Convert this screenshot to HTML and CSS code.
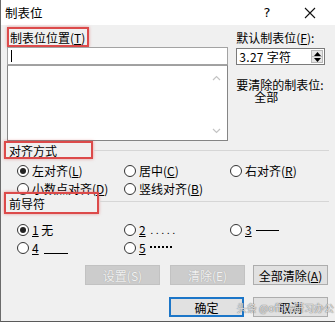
FILE: index.html
```html
<!DOCTYPE html>
<html lang="zh-CN">
<head>
<meta charset="utf-8">
<title>制表位</title>
<link rel="stylesheet" href="styles.css">
</head>
<body>
<div class="window">
  <div class="titlebar">
    <span class="title">制表位</span>
    <span class="help">?</span>
    <span class="close">
      <svg width="12" height="12" viewBox="0 0 12 12"><path d="M1 1L11 11M11 1L1 11" stroke="#111" stroke-width="1.1" fill="none"/></svg>
    </span>
  </div>
  <div class="body">
    <div class="top">
      <div class="left-col">
        <div class="mark mark-pos">制表位位置(<u>T</u>)</div>
        <div class="input"><span class="caret"></span></div>
        <div class="listbox">
          <svg class="scroll-up" width="9" height="6" viewBox="0 0 9 6"><path d="M1 5L4.5 1.5L8 5" stroke="#c4c4c4" stroke-width="1.2" fill="none"/></svg>
          <svg class="scroll-down" width="9" height="6" viewBox="0 0 9 6"><path d="M1 1L4.5 4.5L8 1" stroke="#c4c4c4" stroke-width="1.2" fill="none"/></svg>
        </div>
      </div>
      <div class="right-col">
        <div class="lbl">默认制表位(<u>F</u>):</div>
        <div class="spin">
          <span class="spin-val">3.27 字符</span>
          <span class="spin-btns">
            <span class="spin-b"><svg width="7" height="4" viewBox="0 0 7 4"><path d="M0 4L3.5 0L7 4Z" fill="#000"/></svg></span>
            <span class="spin-b"><svg width="7" height="4" viewBox="0 0 7 4"><path d="M0 0L3.5 4L7 0Z" fill="#000"/></svg></span>
          </span>
        </div>
        <div class="lbl clear-lbl">要清除的制表位:</div>
        <div class="lbl clear-val">全部</div>
      </div>
    </div>

    <div class="section-head">
      <div class="mark mark-align">对齐方式</div>
      <div class="rule"></div>
    </div>
    <div class="radios">
      <label class="radio"><span class="dot on"></span>左对齐(<u>L</u>)</label>
      <label class="radio"><span class="dot"></span>居中(<u>C</u>)</label>
      <label class="radio"><span class="dot"></span>右对齐(<u>R</u>)</label>
      <label class="radio"><span class="dot"></span>小数点对齐(<u>D</u>)</label>
      <label class="radio"><span class="dot"></span>竖线对齐(<u>B</u>)</label>
    </div>

    <div class="section-head lead-head">
      <div class="mark mark-lead">前导符</div>
      <div class="rule"></div>
    </div>
    <div class="radios leaders">
      <label class="radio"><span class="dot on"></span><u>1</u>&nbsp;无</label>
      <label class="radio"><span class="dot"></span><u>2</u>&nbsp;<span class="ld-dots">.....</span></label>
      <label class="radio"><span class="dot"></span><u>3</u>&nbsp;<span class="ld-dash"></span></label>
      <label class="radio"><span class="dot"></span><u>4</u>&nbsp;<span class="ld-under"></span></label>
      <label class="radio"><span class="dot"></span><u>5</u>&nbsp;<span class="ld-mid"></span></label>
    </div>

    <div class="btn-row">
      <span class="btn disabled">设置(S)</span>
      <span class="btn disabled">清除(E)</span>
      <span class="btn">全部清除(<u>A</u>)</span>
    </div>
    <div class="btn-row last">
      <span class="btn default">确定</span>
      <span class="btn">取消</span>
    </div>
  </div>
  <div class="watermark">头条 @office研习办公</div>
</div>
</body>
</html>
```

FILE: styles.css
```css
* { box-sizing: border-box; }
html, body { margin: 0; padding: 0; }
body {
  width: 335px;
  height: 322px;
  overflow: hidden;
  font-family: "Noto Sans CJK SC", "Noto Sans", sans-serif;
  font-size: 12px;
  color: #000;
  background: #f0f0f0;
}
u { text-decoration: underline; text-underline-offset: 1px; }

.window {
  position: relative;
  width: 335px;
  height: 322px;
  background: #f0f0f0;
  border-left: 1px solid #6b6b6b;
  border-bottom: 1px solid #5a5a5a;
  display: flex;
  flex-direction: column;
  overflow: hidden;
}

.titlebar {
  height: 25px;
  background: #fff;
  display: flex;
  align-items: center;
  flex: none;
}
.title {
  margin-left: 4px;
  font-size: 12.5px;
  line-height: 16px;
  margin-top: 1px;
}
.help {
  margin-left: auto;
  width: 12px;
  text-align: center;
  font-family: "DejaVu Sans", sans-serif;
  font-size: 13px;
  line-height: 16px;
}
.close {
  width: 12px;
  height: 12px;
  margin-left: 31px;
  margin-right: 19px;
  display: flex;
}

.body {
  padding: 2px 7px 0 6px;
  flex: 1;
  display: flex;
  flex-direction: column;
}

.top { display: flex; }
.left-col { width: 222px; display: flex; flex-direction: column; }
.right-col { margin-left: 8px; width: 92px; display: flex; flex-direction: column; }

.mark {
  border: 2px solid #dc4a4a;
  box-shadow: 0 0 3px rgba(220, 80, 80, 0.55);
  line-height: 15px;
  display: flex;
  align-items: center;
  padding-left: 1px;
}
.mark-pos { width: 82px; height: 20px; }
.mark-align { width: 89px; height: 18px; margin-left: -3px; padding-left: 3px; }
.mark-lead { width: 95px; height: 22px; margin-left: -3px; padding-left: 3px; }

.input {
  height: 18px;
  background: #fff;
  border: 1px solid #a3a3a3;
  display: flex;
  align-items: center;
  padding-left: 3px;
}
.caret { width: 1px; height: 12px; background: #000; }
.listbox {
  height: 76px;
  background: #fff;
  border: 1px solid #858585;
  border-top: 1px solid #a0a0a0;
  display: flex;
  flex-direction: column;
  align-items: flex-end;
  padding: 9px 6px 6px 0;
  justify-content: space-between;
}

.lbl { line-height: 15px; white-space: nowrap; }
.right-col .lbl:first-child { margin-top: 3px; }
.spin {
  margin-top: 3px;
  height: 17px;
  width: 89px;
  background: #fff;
  border: 1px solid #7a7a7a;
  display: flex;
  align-items: center;
  padding-left: 2px;
}
.spin-val { flex: 1; line-height: 15px; letter-spacing: 0.3px; }
.spin-btns {
  width: 12px;
  height: 13px;
  margin-right: 1px;
  display: flex;
  flex-direction: column;
  background: #e6e6e6;
  border: 1px solid #b9b9b9;
}
.spin-b { flex: 1; display: flex; align-items: center; justify-content: center; }
.spin-b + .spin-b { border-top: 1px solid #b9b9b9; }
.clear-lbl { margin-top: 13px; line-height: 13px; }
.clear-val { margin-left: 18px; line-height: 12px; }

.section-head {
  display: flex;
  align-items: center;
  margin-top: 0;
}
.rule { flex: 1; height: 1px; background: #d6d6d6; margin-left: 1px; margin-right: -1px; margin-top: 1px; }
.lead-head { margin-top: -4px; }
.lead-head .rule { margin-top: -4px; }

.radios {
  display: grid;
  grid-template-columns: 107px 106px 1fr;
  padding-left: 10px;
  row-gap: 4px;
  margin-top: 5px;
}
.leaders { margin-top: 9px; }
.radio {
  display: flex;
  align-items: center;
  height: 14px;
  line-height: 14px;
  white-space: nowrap;
}
.dot {
  width: 12px;
  height: 12px;
  border: 1px solid #333;
  border-radius: 50%;
  background: #fff;
  margin-right: 3px;
  flex: none;
  display: flex;
  align-items: center;
  justify-content: center;
}
.dot.on::after {
  content: "";
  width: 6px;
  height: 6px;
  border-radius: 50%;
  background: #222;
}
.ld-dots { font-size: 9px; letter-spacing: 3px; align-self: flex-end; line-height: 12px; margin-left: 2px; }
.ld-dash { display: inline-block; width: 23px; height: 1px; background: #000; margin-left: 2px; }
.ld-under { display: inline-block; width: 24px; height: 1px; background: #000; align-self: flex-end; margin-bottom: 1px; margin-left: 3px; }
.ld-mid { display: inline-block; width: 22px; height: 2px; border-top: 2px dotted #000; margin-left: 2px; margin-top: -2px; }

.btn-row {
  display: flex;
  justify-content: flex-end;
  gap: 8px;
  margin-top: 10px;
}
.btn-row.last { margin-top: 12px; gap: 9px; }
.btn {
  width: 75px;
  height: 20px;
  background: #e1e1e1;
  border: 1px solid #adadad;
  display: flex;
  align-items: center;
  justify-content: center;
  line-height: 15px;
}
.btn.disabled {
  background: #cccccc;
  border-color: #c2c2c2;
  color: #f2f2f2;
  text-shadow: 0 0 1px #9a9a9a;
}
.btn-row .btn:nth-child(1).disabled { margin-right: 2px; }
.btn.default { border: 2px solid #1c76c8; }

.watermark {
  position: absolute;
  right: 1px;
  bottom: 7px;
  font-size: 10px;
  line-height: 12px;
  color: rgba(255, 255, 255, 0.75);
  text-shadow: 0 0 1px #777, 0 0 1px #777;
  white-space: nowrap;
}
```
